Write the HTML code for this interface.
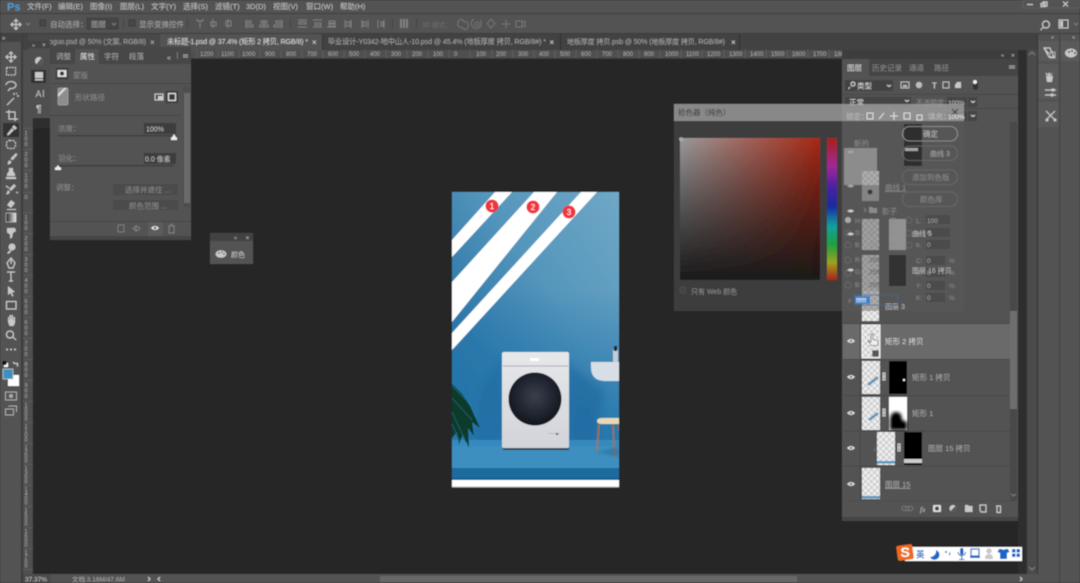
<!DOCTYPE html>
<html lang="zh"><head><meta charset="utf-8"><title>Photoshop</title>
<style>
html,body{margin:0;padding:0;background:#282828;width:1080px;height:583px;overflow:hidden}
svg{display:block;font-family:"Liberation Sans","Noto Sans CJK SC",sans-serif}
text{fill:#c4c4c4;font-size:7.5px}
.d{fill:#8c8c8c}.m{fill:#a8a8a8}.r{font-size:6px;fill:#aaa}
.v{font-size:5.500px;fill:#aaa}
.i{fill:none;stroke:#c8c8c8;stroke-width:1.2}.f{fill:#c8c8c8}
.di{fill:none;stroke:#808080;stroke-width:1}.df{fill:#8a8a8a}
.b{fill:#1769c9}
</style></head><body>
<svg width="1080" height="583" viewBox="0 0 1080 583" xmlns="http://www.w3.org/2000/svg">
<defs>
<pattern id="ck" width="6" height="6" patternUnits="userSpaceOnUse"><rect width="6" height="6" fill="#efefef"/><rect width="3" height="3" fill="#cfcfcf"/><rect x="3" y="3" width="3" height="3" fill="#cfcfcf"/></pattern>
<linearGradient id="wall" x1="1" y1="0" x2="0" y2="1"><stop offset="0" stop-color="#70a8c6"/><stop offset=".4" stop-color="#5596bc"/><stop offset=".72" stop-color="#2f7aab"/><stop offset="1" stop-color="#1f6b9f"/></linearGradient>
<linearGradient id="low" x1="0" y1="0" x2="0" y2="1"><stop offset="0" stop-color="#2677ad" stop-opacity="0"/><stop offset="1" stop-color="#2677ad"/></linearGradient>
<linearGradient id="wash" x1="0" y1="0" x2="0" y2="1"><stop offset="0" stop-color="#e6e7ea"/><stop offset="1" stop-color="#d2d4da"/></linearGradient>
<linearGradient id="sat" x1="0" y1="0" x2="1" y2="0"><stop offset="0" stop-color="#9a9a9a"/><stop offset="1" stop-color="#a82815"/></linearGradient>
<linearGradient id="blk" x1="0" y1="0" x2="0" y2="1"><stop offset="0" stop-color="#000" stop-opacity="0"/><stop offset="1" stop-color="#1a1a1a"/></linearGradient>
<linearGradient id="hue" x1="0" y1="0" x2="0" y2="1"><stop offset="0" stop-color="#a82218"/><stop offset=".2" stop-color="#a0289a"/><stop offset=".35" stop-color="#4a22a0"/><stop offset=".48" stop-color="#1a2aa0"/><stop offset=".62" stop-color="#10a0a0"/><stop offset=".75" stop-color="#20a040"/><stop offset=".88" stop-color="#a0a020"/><stop offset="1" stop-color="#a82218"/></linearGradient>
<radialGradient id="drum" cx=".5" cy=".45" r=".55"><stop offset="0" stop-color="#3a3f4c"/><stop offset=".85" stop-color="#181c26"/><stop offset="1" stop-color="#10131a"/></radialGradient>
<linearGradient id="grad" x1="0" y1="0" x2="1" y2="0"><stop offset="0" stop-color="#222"/><stop offset="1" stop-color="#eee"/></linearGradient>
<filter id="s" x="-5%" y="-5%" width="110%" height="110%"><feGaussianBlur stdDeviation=".5"/></filter>
<filter id="s2"><feGaussianBlur stdDeviation="1.5"/></filter>
<filter id="s3" x="-30%" y="-30%" width="160%" height="160%"><feGaussianBlur stdDeviation="4"/></filter>
<clipPath id="doc"><rect x="452" y="192" width="167" height="295"/></clipPath>
</defs>

<g filter="url(#s)">
<!-- base -->
<rect width="1080" height="583" fill="#282828"/>
<!-- menu bar -->
<rect width="1080" height="14" fill="#535353"/>
<rect y="13" width="1080" height="1" fill="#3c3c3c"/>
<text x="7" y="10.500" style="font-size:11px;font-weight:bold;fill:#4f9bd0">Ps</text>
<text x="27" y="9">文件(F)</text><text x="58" y="9">编辑(E)</text><text x="90" y="9">图像(I)</text><text x="120" y="9">图层(L)</text><text x="151" y="9">文字(Y)</text><text x="183" y="9">选择(S)</text><text x="215" y="9">滤镜(T)</text><text x="246" y="9">3D(D)</text><text x="273" y="9">视图(V)</text><text x="306" y="9">窗口(W)</text><text x="340" y="9">帮助(H)</text>
<rect x="1023" y="0" width="57" height="8" fill="none" stroke="#666" stroke-width=".7"/>
<path class="i" d="M1027 4.500h6M1043 2h4v4h-4zM1041 3.500h4v3h-4zM1063 1.500l5 5M1068 1.500l-5 5"/>

<!-- options bar -->
<rect y="14" width="1080" height="19" fill="#535353"/>
<rect y="33" width="1080" height="1" fill="#3a3a3a"/>
<path class="i" d="M16 19.500v10M11 24.500h10M14 21.500l2-2 2 2M14 27.500l2 2 2-2M13 22.500l-2 2 2 2M19 22.500l2 2-2 2"/>
<path class="di" d="M26 23l2 2 2-2"/>
<rect x="40" y="20" width="5.500" height="6" fill="#4a4a4a" stroke="#333" stroke-width=".7"/>
<text x="50" y="27" class="m">自动选择：</text>
<rect x="87" y="18" width="31" height="11" fill="#444" stroke="#3a3a3a" stroke-width=".6"/>
<text x="91" y="27" class="m">图层</text>
<path class="di" d="M112 23l2 2 2-2"/>
<rect x="129" y="20" width="6" height="6" fill="#4a4a4a" stroke="#333" stroke-width=".7"/>
<text x="139" y="27" class="m">显示变换控件</text>
<rect x="123" y="18" width="1" height="11" fill="#444"/><rect x="187" y="18" width="1" height="11" fill="#444"/><rect x="290" y="18" width="1" height="11" fill="#444"/><rect x="392" y="18" width="1" height="11" fill="#444"/><rect x="416" y="18" width="1" height="11" fill="#444"/>
<path class="di" d="M197 19v2M203 19v2M197 21h6M200 21v7M213 19v9M211 22h5v4h-5zM228 19v9M226 21h5v5h-5zM246 20v8M246 21h5v2h-5zM246 25h7v2h-7zM264 20v8M261 21h6v2h-6zM260 25h8v2h-8zM282 20v8M276 21h6v2h-6zM274 25h8v2h-8zM298 20h9M299 22h7v2h-7zM298 27h9M313 20h9M315 23h6v2h-6zM313 27h9M327 27h9M329 21h6v2h-6zM329 24h6v2h-6zM345 20v8M351 20v8M347 22h3v4h-3zM362 20v8M368 20v8M363 22h3v4h-3zM378 20v8M384 20v8M381 22h2v4h-2z"/>
<rect x="403" y="19" width="2" height="9" fill="#808080"/><rect x="400" y="19" width="2" height="9" fill="#808080"/><rect x="406" y="19" width="2" height="9" fill="#808080"/>
<text x="422" y="27" style="font-size:6.500px;fill:#6e6e6e">3D 模式：</text>
<path d="M458 23a3 3 0 0 1 6-1a3 3 0 0 1 4 4a3 3 0 0 1-6 1a3 3 0 0 1-4-4zM474 19a5 5 0 1 0 6 1M477 22a2 2 0 1 0 .1 0M491 19l4 4.500-4 4.500-4-4.500zM506 19.500v9M501.500 24h9M516 21h6v6h-6zM522 23l3-2v6l-3-2z" fill="none" stroke="#747474" stroke-width="1"/>
<path class="i" d="M1046 21a3.500 3.500 0 1 1-.1 0M1043 27.500l-2.500 2.500"/>
<rect x="1059" y="20" width="9" height="8" fill="none" stroke="#c8c8c8"/><rect x="1060" y="21" width="3" height="6" fill="#c8c8c8"/>
<path class="di" d="M1074 23l2 2 2-2"/>

<!-- tab row -->
<rect y="34" width="1080" height="16" fill="#424242"/>
<rect x="28" y="34" width="132" height="16" fill="#484848"/>
<text x="49" y="44" class="m" textLength="97" style="font-size:7px">oguo.psd @ 50% (文案, RGB/8)</text>
<text x="150" y="45" style="font-size:8px;fill:#bbb">×</text>
<rect x="160" y="34" width="162" height="16" fill="#535353"/>
<text x="167" y="44" textLength="141" style="font-size:7.200px;fill:#dcdcdc">未标题-1.psd @ 37.4% (矩形 2 拷贝, RGB/8) *</text>
<text x="312" y="45" style="font-size:8px;fill:#ddd">×</text>
<rect x="322" y="34" width="1" height="16" fill="#333"/>
<text x="328" y="44" class="m" textLength="218" style="font-size:7.200px">毕业设计-Y0342-地中山人-10.psd @ 45.4% (地板厚度 拷贝, RGB/8#) *</text>
<text x="549.500" y="45" style="font-size:8px;fill:#ddd">×</text>
<rect x="560" y="34" width="1" height="16" fill="#333"/>
<text x="567" y="44" class="m" textLength="158" style="font-size:7px">地板厚度 拷贝.psb @ 50% (地板厚度 拷贝, RGB/8#)</text>
<text x="731" y="45" style="font-size:8px;fill:#ddd">×</text>
<rect x="739" y="34" width="1" height="16" fill="#333"/>

<!-- top ruler -->
<rect x="23" y="50" width="1015" height="9" fill="#505050"/>
<rect x="23" y="58" width="1004" height="1" fill="#3a3a3a"/>
<text class="r" x="200" y="56">1200</text><text class="r" x="221" y="56">1100</text><text class="r" x="242" y="56">1000</text><text class="r" x="265" y="56">900</text><text class="r" x="286" y="56">800</text><text class="r" x="307" y="56">700</text><text class="r" x="328" y="56">600</text><text class="r" x="349" y="56">500</text><text class="r" x="370" y="56">400</text><text class="r" x="391" y="56">300</text><text class="r" x="412" y="56">200</text><text class="r" x="433" y="56">100</text><text class="r" x="454" y="56">0</text><text class="r" x="476" y="56">100</text><text class="r" x="496" y="56">200</text><text class="r" x="518" y="56">300</text><text class="r" x="539" y="56">400</text><text class="r" x="560" y="56">500</text><text class="r" x="581" y="56">600</text><text class="r" x="602" y="56">700</text><text class="r" x="623" y="56">800</text><text class="r" x="644" y="56">900</text><text class="r" x="665" y="56">1000</text><text class="r" x="686" y="56">1100</text><text class="r" x="707" y="56">1200</text><text class="r" x="729" y="56">1300</text><text class="r" x="750" y="56">1400</text><text class="r" x="771" y="56">1500</text><text class="r" x="792" y="56">1600</text><text class="r" x="813" y="56">1700</text><text class="r" x="834" y="56">180</text><text class="r" x="1023" y="56">2</text>
<path d="M197 50v8M218 50v8M239 50v8M260 50v8M281 50v8M302 50v8M323 50v8M344 50v8M365 50v8M386 50v8M407 50v8M428 50v8M449 50v8M470 50v8M492 50v8M513 50v8M534 50v8M555 50v8M576 50v8M597 50v8M618 50v8M639 50v8M660 50v8M681 50v8M702 50v8M724 50v8M745 50v8M766 50v8M787 50v8M808 50v8M829 50v8" stroke="#6a6a6a" stroke-width=".6"/>

<!-- left ruler -->
<rect x="23" y="50" width="10" height="524" fill="#505050"/>
<rect x="32.500" y="58" width=".7" height="516" fill="#3a3a3a"/>
<path d="M23 128.500h10M23 149.500h10M23 170.500h10M23 192.500h10M23 212.500h10M23 233.500h10M23 254.500h10M23 275.500h10M23 296.500h10M23 317.500h10M23 338.500h10M23 359.500h10M23 380.500h10M23 401.500h10M23 422.500h10M23 443.500h10M23 464.500h10M23 485.500h10M23 506.500h10M23 527.500h10M23 548.500h10M23 569.500h10" stroke="#666" stroke-width=".5"/>
<text class="v" x="24.500" y="135"><tspan x="24.500">1</tspan><tspan x="24.500" dy="5.500">0</tspan><tspan x="24.500" dy="5.500">0</tspan></text>
<text class="v" x="24.500" y="156"><tspan x="24.500">2</tspan><tspan x="24.500" dy="5.500">0</tspan><tspan x="24.500" dy="5.500">0</tspan></text>
<text class="v" x="24.500" y="177"><tspan x="24.500">1</tspan><tspan x="24.500" dy="5.500">0</tspan><tspan x="24.500" dy="5.500">0</tspan></text>
<text class="v" x="24.500" y="199">0</text>
<text class="v" x="24.500" y="219"><tspan x="24.500">1</tspan><tspan x="24.500" dy="5.500">0</tspan><tspan x="24.500" dy="5.500">0</tspan></text>
<text class="v" x="24.500" y="240"><tspan x="24.500">2</tspan><tspan x="24.500" dy="5.500">0</tspan><tspan x="24.500" dy="5.500">0</tspan></text>
<text class="v" x="24.500" y="261"><tspan x="24.500">3</tspan><tspan x="24.500" dy="5.500">0</tspan><tspan x="24.500" dy="5.500">0</tspan></text>
<text class="v" x="24.500" y="282"><tspan x="24.500">4</tspan><tspan x="24.500" dy="5.500">0</tspan><tspan x="24.500" dy="5.500">0</tspan></text>
<text class="v" x="24.500" y="303"><tspan x="24.500">5</tspan><tspan x="24.500" dy="5.500">0</tspan><tspan x="24.500" dy="5.500">0</tspan></text>
<text class="v" x="24.500" y="324"><tspan x="24.500">6</tspan><tspan x="24.500" dy="5.500">0</tspan><tspan x="24.500" dy="5.500">0</tspan></text>
<text class="v" x="24.500" y="345"><tspan x="24.500">7</tspan><tspan x="24.500" dy="5.500">0</tspan><tspan x="24.500" dy="5.500">0</tspan></text>
<text class="v" x="24.500" y="366"><tspan x="24.500">8</tspan><tspan x="24.500" dy="5.500">0</tspan><tspan x="24.500" dy="5.500">0</tspan></text>
<text class="v" x="24.500" y="387"><tspan x="24.500">9</tspan><tspan x="24.500" dy="5.500">0</tspan><tspan x="24.500" dy="5.500">0</tspan></text>
<text class="v" x="24.500" y="407"><tspan x="24.500">1</tspan><tspan x="24.500" dy="4.500">0</tspan><tspan x="24.500" dy="4.500">0</tspan><tspan x="24.500" dy="4.500">0</tspan></text>
<text class="v" x="24.500" y="428"><tspan x="24.500">1</tspan><tspan x="24.500" dy="4.500">1</tspan><tspan x="24.500" dy="4.500">0</tspan><tspan x="24.500" dy="4.500">0</tspan></text>
<text class="v" x="24.500" y="449"><tspan x="24.500">1</tspan><tspan x="24.500" dy="4.500">2</tspan><tspan x="24.500" dy="4.500">0</tspan><tspan x="24.500" dy="4.500">0</tspan></text>
<text class="v" x="24.500" y="470"><tspan x="24.500">1</tspan><tspan x="24.500" dy="4.500">3</tspan><tspan x="24.500" dy="4.500">0</tspan><tspan x="24.500" dy="4.500">0</tspan></text>
<text class="v" x="24.500" y="491"><tspan x="24.500">1</tspan><tspan x="24.500" dy="4.500">4</tspan><tspan x="24.500" dy="4.500">0</tspan><tspan x="24.500" dy="4.500">0</tspan></text>
<text class="v" x="24.500" y="512"><tspan x="24.500">1</tspan><tspan x="24.500" dy="4.500">5</tspan><tspan x="24.500" dy="4.500">0</tspan><tspan x="24.500" dy="4.500">0</tspan></text>
<text class="v" x="24.500" y="533"><tspan x="24.500">1</tspan><tspan x="24.500" dy="4.500">6</tspan><tspan x="24.500" dy="4.500">0</tspan><tspan x="24.500" dy="4.500">0</tspan></text>
<text class="v" x="24.500" y="554"><tspan x="24.500">1</tspan><tspan x="24.500" dy="4.500">7</tspan><tspan x="24.500" dy="4.500">0</tspan><tspan x="24.500" dy="4.500">0</tspan></text>

<!-- toolbar -->
<rect y="42" width="22" height="541" fill="#535353"/>
<rect x="21" y="34" width="2" height="549" fill="#3b3b3b"/>
<rect y="34" width="22" height="8" fill="#424242"/>
<text x="2" y="40" style="font-size:6px">»</text>
<path class="i" d="M11 52v10M6 57h10M9 54l2-2 2 2M9 60l2 2 2-2M8 55l-2 2 2 2M14 55l2 2-2 2"/>
<rect x="6.500" y="67.500" width="9" height="7.500" class="i" stroke-dasharray="1.800 1"/>
<path class="i" d="M6 85a5 3.500 0 1 1 4 3.500l-2 2.500"/>
<path class="i" d="M7 105l7-7M14 93v2M17 96h2M16 93l1 1"/>
<path class="i" d="M9 110v9h9M6 112h9v9" stroke-width="1.400"/>
<rect x="3" y="123" width="16" height="14" fill="#333"/>
<path class="f" d="M14 125l3 3-2 2-3-3zM12 128l2 2-5 5-2 .5.500-2z"/>
<rect x="6.500" y="140.500" width="9" height="8" rx="3" class="i" stroke-dasharray="2 1"/>
<path class="f" d="M16 153l1.500 1.500-5 6-2-2zM9.500 160l2 2-1.500 2-2.500.5.500-2.500z"/>
<path class="f" d="M9 168h4v3l2 3v2h-8v-2l2-3zM6 177h10v2h-10z"/>
<path class="f" d="M14 184l2 2-5 5-2-2zM8 190l2 2-1.500 2-2.500.5z"/><path class="i" d="M6 186l3 2M16 192l2 1"/>
<path class="f" d="M11 200l4 3-4 5-4-3zM7 209h9v1h-9z"/>
<rect x="6" y="213" width="10" height="9" fill="url(#grad)" stroke="#ccc" stroke-width=".6"/>
<path class="f" d="M7 228h8l1 3-3 2-1 5-2 .5v-4l-3-2z"/>
<path class="f" d="M10 250l-3 3 1.500 1 3-3z"/><circle class="f" cx="12" cy="247" r="3.500"/>
<path class="i" d="M11 258l4 5-2 5h-4l-2-5zM11 258v6"/>
<path class="i" d="M7 272h8M11 272v9M9 281h4" stroke-width="1.500"/>
<path class="f" d="M8 286l7 6-3 .5 1.500 3.500-1.500.5-1.500-3.500-2.500 2z"/>
<rect x="6.500" y="301.500" width="9.500" height="7.500" class="i"/>
<path class="f" d="M8 322v-5h1v3h.5v-5h1.500v4h.5v-4h1.500v5h.5v-3h1.500v6l-1.500 3h-4z"/>
<path class="i" d="M10 331a3.500 3.500 0 1 1-.1 0M13 337l3 3"/>
<circle class="f" cx="7" cy="349.500" r="1"/><circle class="f" cx="11" cy="349.500" r="1"/><circle class="f" cx="15" cy="349.500" r="1"/>
<rect x="4" y="363" width="4" height="4" fill="#fff"/><rect x="2.500" y="361" width="4" height="4" fill="#111"/>
<path class="i" d="M13 362l1.500 1.500 3 0 0 3" stroke-width=".9"/>
<rect x="8" y="375" width="11" height="11" fill="#fff"/>
<rect x="3" y="369" width="10" height="10" fill="#3c8fbf" stroke="#d0d0d0" stroke-width=".7"/>
<rect x="5.500" y="392" width="11" height="8" fill="none" stroke="#aaa"/><circle cx="11" cy="396" r="2" fill="#aaa"/>
<path d="M8.500 406h8v6M5.500 409h8v6h-8z" fill="none" stroke="#aaa"/>

<!-- document -->
<g clip-path="url(#doc)">
<rect x="452" y="192" width="167" height="253" fill="url(#wall)"/>
<rect x="452" y="290" width="167" height="155" fill="url(#low)"/>
<path d="M566 362l38 28-8 55h-27z" fill="#1c659c" opacity=".55" filter="url(#s3)"/>
<path d="M503 355l-22 35-6 52h28z" fill="#1c659c" opacity=".4" filter="url(#s3)"/>
<rect x="452" y="440" width="167" height="28" fill="#3d8fc0"/>
<rect x="452" y="440" width="167" height="6" fill="#358abd"/>
<rect x="452" y="468" width="167" height="11" fill="#1e6b9e"/>
<rect x="452" y="478" width="167" height="2" fill="#155f90"/>
<rect x="452" y="480" width="167" height="7" fill="#fff"/>
<path d="M495 192h17L452 257v-17zM534 192h23L452 322v-40zM581 192h16L452 350v-17z" fill="#fff"/>
<!-- washer -->
<rect x="502" y="352" width="67" height="96" rx="2" fill="url(#wash)"/>
<rect x="503" y="365.500" width="65" height="1" fill="#a8acb2"/>
<rect x="530" y="358" width="9" height="3" fill="#fff"/>
<rect x="503" y="448" width="66" height="2" fill="#33465a"/>
<circle cx="535" cy="399" r="26.500" fill="url(#drum)"/>
<rect x="548" y="433" width="12" height=".8" fill="#b5b8bc"/><rect x="556" y="433" width="2" height="2" fill="#555"/>
<!-- sink -->
<path d="M591 362h28v19h-14q-14 0-14-14z" fill="#d8dee5"/>
<rect x="613" y="350" width="5" height="12" fill="#c5ccd5"/><rect x="614" y="346" width="3" height="5" fill="#222"/>
<!-- stool -->
<path d="M597 421q0-3 5-3h17v6h-17q-5 0-5-3z" fill="#e7d8b6"/>
<path d="M599 424l-2 27M613 424l1.500 34M619 424v6" stroke="#a56f45" stroke-width="1.600" fill="none"/>
<path d="M596 452l23 5v-10z" fill="#235f8a" opacity=".4" filter="url(#s2)"/>
<!-- plant -->
<path d="M452 384l10 10 8 12 10 22-8-6 2 14-6-8 1 20-6-14-4 10-2-12-5 6z" fill="#0c3a2c"/>
<path d="M452 386l14 14M452 398l20 22M452 412l14 30M452 424l8 18" stroke="#1e5b6a" stroke-width="1" fill="none"/>
</g>
<rect x="452" y="486.500" width="167" height="1" fill="#b5b5b5"/>
<circle cx="492" cy="206" r="6.500" fill="#f0353f"/><text x="492" y="209" text-anchor="middle" style="font-size:8px;fill:#fff">1</text>
<circle cx="533" cy="207" r="6.500" fill="#f0353f"/><text x="533" y="210" text-anchor="middle" style="font-size:8px;fill:#fff">2</text>
<circle cx="569" cy="212" r="6.500" fill="#f0353f"/><text x="569" y="215" text-anchor="middle" style="font-size:8px;fill:#fff">3</text>

<!-- narrow strip panel -->
<rect x="28" y="41" width="22" height="77" fill="#505050"/>
<rect x="28" y="41" width="22" height="7" fill="#424242"/>
<text x="32" y="47" style="font-size:5.500px">»</text><text x="42" y="47" style="font-size:6.500px">×</text>
<circle cx="39" cy="61" r="4" fill="#c8c8c8"/><path d="M39 57a4 4 0 0 1 0 8z" fill="#555" transform="rotate(40 39 61)"/>
<rect x="31" y="70" width="15" height="13" fill="#333"/>
<path class="f" d="M35 72h8v6h-8zM35 79h8v1.500h-8z"/>
<text x="35.500" y="97" style="font-size:9px">A</text><rect x="43" y="90" width=".8" height="7" fill="#c8c8c8"/>
<text x="36" y="112" style="font-size:10px;font-weight:bold">¶</text>
<rect x="33" y="118" width="17" height="10" fill="#2e2e2e"/>

<!-- properties panel -->
<rect x="50" y="47" width="141" height="193" fill="#535353"/>
<rect x="50" y="47" width="141" height="17" fill="#474747"/>
<rect x="75" y="49" width="24" height="15" fill="#535353"/>
<text x="56" y="59" class="m">调整</text><text x="80" y="59" style="fill:#ddd">属性</text><text x="104" y="59" class="m">字符</text><text x="129" y="59" class="m">段落</text>
<text x="167" y="60" style="font-size:7px">«</text><rect x="177" y="52" width=".7" height="7" fill="#888"/><path d="M183 55h5M183 57h5" stroke="#aaa"/>
<rect x="56" y="68" width="12" height="11" fill="#3a3a3a" stroke="#444" stroke-width=".6"/><rect x="57.500" y="70" width="9" height="7" fill="#ddd"/><circle cx="62" cy="73.500" r="2" fill="#333"/>
<text x="73" y="78" class="d">蒙版</text>
<rect x="50" y="83" width="141" height=".8" fill="#444"/>
<rect x="50" y="115" width="132" height=".8" fill="#444"/>
<rect x="58" y="88" width="10" height="17" rx="1" fill="#8d8d8d" stroke="#bbb" stroke-width=".5"/><path d="M58 94l6-6h3l-9 9z" fill="#ddd"/>
<text x="75" y="100" class="d">形状路径</text>
<rect x="155" y="94" width="8" height="6" fill="none" stroke="#ccc"/><rect x="158" y="96" width="5" height="4" fill="#ccc"/>
<rect x="166" y="91" width="12" height="12" fill="#383838"/><rect x="168.500" y="93.500" width="7" height="7" fill="none" stroke="#ddd" stroke-width="1.400"/>
<rect x="183" y="86" width="7" height="121" fill="#4e4e4e"/><rect x="184" y="93" width="6" height="110" fill="#6a6a6a"/>
<text x="58" y="131" class="d">浓度：</text>
<rect x="144" y="123" width="32" height="11" fill="#3d3d3d"/><text x="146" y="131.500" style="font-size:7px">100%</text>
<rect x="58" y="135" width="116" height="1.500" fill="#3f3f3f"/><path d="M174 134l-3 5h6z" fill="#eee"/><rect x="171" y="137.500" width="6" height="2.500" fill="#eee"/>
<text x="58" y="161" class="d">羽化：</text>
<rect x="144" y="153" width="32" height="11" fill="#3d3d3d"/><text x="145" y="161.500" style="font-size:7px">0.0 像素</text>
<rect x="58" y="165" width="116" height="1.500" fill="#3f3f3f"/><path d="M58 165l-3 4h6z" fill="#eee"/><rect x="55" y="167.500" width="6" height="2.500" fill="#eee"/>
<text x="56" y="190" class="d">调整：</text>
<rect x="113" y="184" width="65" height="11" fill="#4c4c4c"/><text x="125" y="192.500" class="d">选择并遮住 ...</text>
<rect x="113" y="200" width="65" height="10" fill="#4c4c4c"/><text x="129" y="208.500" class="d">颜色范围 ...</text>
<rect x="50" y="221" width="141" height=".8" fill="#444"/>
<rect x="148" y="222" width="15" height="15" fill="#5c5c5c"/>
<rect x="118" y="225" width="6" height="7" fill="none" stroke="#999" stroke-dasharray="1 1"/>
<path class="di" d="M133 228.500q4-4 7 0q-3 4-7 0zM136 225v7"/>
<path d="M151 228q4-4 8 0q-4 4-8 0z" fill="#e8e8e8"/><circle cx="155" cy="228" r="1.200" fill="#444"/>
<path class="di" d="M168 226h7M169 226v7h5v-7M170 224.500h3"/>
<rect x="50" y="236" width="141" height="4" fill="#444"/>

<!-- colour mini panel -->
<rect x="210" y="233" width="43" height="31" fill="#535353"/>
<rect x="210" y="233" width="43" height="8" fill="#424242"/>
<text x="234" y="239.500" style="font-size:5.500px">»</text><text x="245.500" y="240" style="font-size:6.500px">×</text>
<ellipse cx="221" cy="254" rx="5.500" ry="3.800" fill="#c8c8c8"/><circle cx="219" cy="253" r=".8" fill="#444"/><circle cx="222" cy="252" r=".8" fill="#444"/><circle cx="224" cy="254" r=".8" fill="#444"/>
<text x="231" y="257" style="font-size:7px">颜色</text>

<!-- layers panel -->
<rect x="842" y="50" width="176" height="471" fill="#535353"/>
<rect x="842" y="50" width="176" height="9" fill="#3e3e3e"/>
<rect x="842" y="59" width="176" height="17" fill="#444"/>
<rect x="842" y="59" width="27" height="17" fill="#535353"/>
<text x="847" y="70.500" style="fill:#ddd">图层</text><text x="872" y="70.500" class="d">历史记录</text><text x="909" y="70.500" class="d">通道</text><text x="934" y="70.500" class="d">路径</text>
<text x="1001" y="57" style="font-size:5.500px">«</text><text x="1011" y="57.500" style="font-size:6.500px">×</text>
<path d="M1009 66h6M1009 68h6" stroke="#aaa"/>
<rect x="845" y="80" width="48" height="11" fill="#424242"/>
<path class="i" d="M851 84a2 2 0 1 1 0 .1M850 87l-1.500 2" stroke-width=".9"/>
<text x="857" y="88.500" style="fill:#ddd">类型</text><path class="i" d="M887 85l2 1.500 2-1.500" stroke-width=".8"/>
<rect x="901" y="82" width="8" height="6" fill="none" stroke="#bbb"/><rect x="903" y="85" width="4" height="2" fill="#bbb"/>
<circle cx="919" cy="85" r="3.200" fill="#bbb"/>
<text x="932" y="88.500" style="font-size:8px;font-weight:bold">T</text>
<rect x="943" y="82" width="6" height="6" fill="none" stroke="#bbb"/>
<path class="f" d="M957 82h4v6h-6v-3z"/>
<rect x="973" y="80" width="5" height="10" rx="2.500" fill="#333"/><circle cx="975" cy="82" r="2" fill="#eee"/>
<rect x="842" y="94" width="176" height=".8" fill="#444"/>
<rect x="845" y="97" width="66" height="10" fill="#444"/><text x="849" y="105" style="fill:#ddd">正常</text><path class="i" d="M905 100l2 1.500 2-1.500" stroke-width=".8"/>
<text x="916" y="105" class="d" style="font-size:7px">不透明度：</text>
<rect x="947" y="97" width="20" height="10" fill="#444"/><text x="948" y="105" style="font-size:6.500px">100%</text>
<rect x="968" y="97" width="9" height="10" fill="#444"/><path class="i" d="M971 101l2 1.500 2-1.500" stroke-width=".8"/>
<rect x="842" y="108" width="176" height=".8" fill="#444"/>
<rect x="947" y="111" width="20" height="10" fill="#444"/><rect x="968" y="111" width="9" height="10" fill="#444"/><path class="i" d="M971 115l2 1.500 2-1.500" stroke-width=".8"/>

<!-- layer rows -->
<rect x="843" y="324" width="167" height="35" fill="#6a6a6a"/>
<path d="M843 359.500h167M843 395.500h167M843 431h167M843 466h167M843 501h167M843 323.500h167M860 324v177" stroke="#454545" stroke-width=".7" fill="none"/>
<!-- selected layer -->
<rect x="862" y="325" width="18" height="33" fill="url(#ck)" stroke="#fff" stroke-width=".8"/>
<path d="M871 334v8h-1l-2-1.500 3 5h7v-5l-5-1v-5.500z" fill="#eee" stroke="#444" stroke-width=".6"/>
<rect x="872" y="350" width="7" height="7" fill="#555" stroke="#ddd" stroke-width=".6"/>
<text x="885" y="344" style="fill:#d5d5d5">矩形 2 拷贝</text>
<!-- rect 1 copy -->
<rect x="862" y="361" width="18" height="33" fill="url(#ck)"/><path d="M868 385l10-8" stroke="#4f8fba" stroke-width="2.200"/>
<path class="i" d="M883 373h2v3h-2zM883 377h2v3h-2z" stroke-width=".6"/>
<rect x="889" y="361" width="18" height="33" fill="#000"/><rect x="903" y="379" width="2" height="2" fill="#eee"/>
<text x="912" y="380" class="m">矩形 1 拷贝</text>
<!-- rect 1 -->
<rect x="862" y="397" width="18" height="33" fill="url(#ck)"/><path d="M869 420l9-7" stroke="#4f8fba" stroke-width="2.200"/>
<path class="i" d="M883 409h2v3h-2zM883 413h2v3h-2z" stroke-width=".6"/>
<rect x="889" y="397" width="18" height="33" fill="#fff"/><path d="M890 430v-11q1-7 6-7q6 0 6 8l5 2v8z" fill="#000" filter="url(#s2)"/>
<text x="912" y="416" class="m">矩形 1</text>
<!-- layer 15 copy -->
<text x="873" y="451" class="m" style="font-size:6px">↓</text>
<rect x="877" y="432" width="18" height="33" fill="url(#ck)"/><rect x="877" y="461" width="18" height="2.500" fill="#5a9ac0"/>
<path class="i" d="M898 444h2v3h-2zM898 448h2v3h-2z" stroke-width=".6"/>
<rect x="904" y="432" width="18" height="33" fill="#000"/><rect x="904" y="459" width="18" height="4" fill="#ccc"/>
<text x="928" y="451" class="m">图层 15 拷贝</text>
<!-- layer 15 -->
<rect x="862" y="468" width="18" height="31" fill="url(#ck)"/><rect x="862" y="496" width="18" height="2.500" fill="#5a9ac0"/>
<text x="885" y="487" class="m" style="text-decoration:underline">图层 15</text>
<!-- eyes -->
<g fill="#ddd"><path d="M847 341q4-4 8 0q-4 4-8 0z"/><path d="M847 377q4-4 8 0q-4 4-8 0z"/><path d="M847 413q4-4 8 0q-4 4-8 0z"/><path d="M847 448q4-4 8 0q-4 4-8 0z"/><path d="M847 484q4-4 8 0q-4 4-8 0z"/></g>
<g fill="#444"><circle cx="851" cy="341" r="1"/><circle cx="851" cy="377" r="1"/><circle cx="851" cy="413" r="1"/><circle cx="851" cy="448" r="1"/><circle cx="851" cy="484" r="1"/></g>
<!-- scrollbar -->
<rect x="1010" y="122" width="7" height="379" fill="#4a4a4a"/>
<rect x="1010" y="311" width="7" height="98" fill="#6e6e6e"/>
<path class="di" d="M1011 494l2.500 2 2.500-2"/>
<!-- footer -->
<rect x="842" y="501" width="176" height="16" fill="#535353"/>
<rect x="842" y="517" width="176" height="4" fill="#444"/>
<path d="M904 506.500h3a2 2 0 0 1 0 4h-3a2 2 0 0 1 0-4zM908 506.500h3a2 2 0 0 1 0 4h-3a2 2 0 0 1 0-4z" fill="none" stroke="#777"/>
<text x="920" y="512" style="font-size:7.500px;font-style:italic;font-family:'Liberation Serif',serif">fx</text>
<rect x="933" y="505" width="8" height="7" rx="1" fill="#ddd"/><circle cx="937" cy="508.500" r="2" fill="#444"/>
<circle cx="953" cy="508.500" r="3.500" fill="#ccc"/><path d="M953 505a3.500 3.500 0 0 1 0 7z" fill="#555" transform="rotate(45 953 508.500)"/>
<path class="f" d="M965 505h3l1 1h3.500v6h-7.500z"/>
<path class="i" d="M980 505h6v7h-5l-1-2z" stroke-width=".9"/>
<path class="i" d="M996 506h5M997 506v6.500h3.500v-6.500" stroke-width=".9"/>

<!-- right region -->
<rect x="1018" y="50" width="9" height="524" fill="#2e2e2e"/>
<rect x="1027" y="50" width="10" height="524" fill="#4c4c4c"/>
<path class="di" d="M1029 55l3-3 3 3M1029 567l3 3 3-3"/>
<rect x="1037" y="34" width="1" height="549" fill="#333"/>
<rect x="1038" y="34" width="22" height="549" fill="#535353"/>
<rect x="1059" y="34" width="1" height="549" fill="#3f3f3f"/>
<rect x="1060" y="34" width="20" height="549" fill="#535353"/>
<text x="1051" y="39" style="font-size:5.500px">«</text><text x="1072" y="39" style="font-size:5.500px">«</text>
<rect x="1038" y="41" width="21" height="20" fill="#5a5a5a"/><rect x="1061" y="41" width="19" height="20" fill="#5a5a5a"/>
<path class="i" d="M1044 48l5 9h5l-4-9zM1044 48l5 6" stroke-width=".9"/><rect x="1050" y="52" width="5" height="6" fill="none" stroke="#ccc" stroke-width=".7"/>
<ellipse cx="1071" cy="53" rx="6" ry="4.500" fill="#c8c8c8"/><circle cx="1069" cy="52" r="1" fill="#444"/><circle cx="1072" cy="51" r="1" fill="#444"/><circle cx="1075" cy="53" r="1" fill="#444"/>
<rect x="1038" y="64" width="21" height="35" fill="#5a5a5a"/><rect x="1038" y="102" width="21" height="25" fill="#5a5a5a"/>
<path class="f" d="M1046 76h7l-1 6h-5zM1046 72l2 3 1-3 2 3 1-3v3l-3 1-3-1z"/>
<path class="i" d="M1045 90h11M1045 95h11" stroke-width=".9"/><circle class="f" cx="1053" cy="90" r="1.600"/><circle class="f" cx="1052" cy="95" r="1.600"/>
<path class="i" d="M1046 111l9 9M1055 111l-9 9" stroke-width="1.400"/><circle class="f" cx="1047" cy="120" r="1.500"/><circle class="f" cx="1055" cy="120" r="1.500"/>

<!-- status bar -->
<rect x="23" y="574" width="1015" height="9" fill="#535353"/>
<rect x="23" y="574" width="28" height="9" fill="#4b4b4b"/>
<text x="25" y="581.500" style="font-size:6.500px">37.37%</text>
<text x="72" y="581.500" class="m" style="font-size:6.500px">文档:3.16M/47.6M</text>
<path class="i" d="M148 577l2 2-2 2M160 577l-2 2 2 2" stroke-width=".7"/>
<rect x="380" y="576" width="417" height="6" fill="#686868"/>
<path class="i" d="M1020 577l2 2-2 2" stroke-width=".7"/>

<!-- colour picker -->
<rect x="844" y="148" width="33" height="37" fill="#b3b3b3"/>
<rect x="862" y="171" width="17" height="14" fill="url(#ck)"/>
<rect x="862" y="185" width="17" height="16" fill="#a5a5a5"/><circle cx="870" cy="192" r="2.500" fill="#222"/>
<path d="M847 152q4-3 7 0q-3 3-7 0zM847 186q4-3 7 0q-3 3-7 0z" fill="#ddd"/>
<rect x="904" y="124" width="18" height="42" fill="#0e0e0e"/><rect x="905" y="148" width="13" height="3" fill="#ddd"/>
<rect x="862" y="219" width="17" height="31" fill="url(#ck)" opacity=".85"/>
<rect x="889" y="219" width="17" height="31" fill="#bdbdbd"/>
<rect x="862" y="255" width="17" height="36" fill="url(#ck)" opacity=".85"/>
<path d="M889 255h17v31h-17z" fill="#111"/>
<rect x="862" y="291" width="17" height="30" fill="url(#ck)"/>
<rect x="674" y="121" width="290" height="190" fill="rgba(90,90,90,.44)"/>
<rect x="674" y="104" width="290" height="17" fill="rgba(160,160,160,.8)"/>
<text x="678" y="115" style="fill:#2e2e2e;font-size:7.500px">拾色器（纯色）</text>
<path d="M952 109l6 6M958 109l-6 6" stroke="#333" stroke-width="1" fill="none"/>
<text x="846" y="119" style="fill:#bcbcbc">锁定：</text>
<path d="M867 113h6v6h-6zM879 119l5-6M890 116h8M894 112v8M904 113h6v6h-6zM917 115h5v5h-5z" stroke="#dcdcdc" fill="none" stroke-width="1.100"/>
<text x="928" y="119" style="fill:#bcbcbc">填充：</text><text x="948" y="119" style="font-size:6.500px;fill:#eee">100%</text>
<rect x="680" y="138" width="140" height="142" fill="url(#sat)"/>
<rect x="680" y="138" width="140" height="142" fill="url(#blk)"/>
<circle cx="681" cy="139" r="1.500" fill="none" stroke="#ccc" stroke-width=".6"/>
<rect x="827" y="138" width="10" height="142" fill="url(#hue)"/>
<rect x="680" y="287" width="6" height="6" fill="#444" stroke="#555" stroke-width=".5"/>
<text x="691" y="294" style="font-size:7px" class="d">只有 Web 颜色</text>
<text x="854" y="146" class="d">新的</text>
<g fill="none" stroke="#6c6c6c" stroke-width=".8">
<rect x="902.500" y="126.500" width="55" height="14.500" rx="7" stroke="#9a9a9a"/>
<rect x="902.500" y="146" width="55" height="14.500" rx="7"/>
<rect x="902.500" y="170" width="55" height="14.500" rx="7"/>
<rect x="902.500" y="192" width="55" height="14.500" rx="7"/>
</g>
<text x="923" y="136.500" style="fill:#bbb">确定</text>
<text x="930" y="156" class="m" style="font-size:7px">曲线 3</text>
<text x="912" y="180" class="d">添加到色板</text>
<text x="920" y="202" class="d">颜色库</text>
<text x="885" y="190" class="d" style="text-decoration:underline">曲线 1</text>
<path d="M847 211q4-3 7 0q-3 3-7 0z" fill="#ccc"/><path class="di" d="M864 208l2 2-2 2"/>
<path class="df" d="M869 207h3l1 1h4v5h-8z"/><text x="882" y="214" class="d">影子</text>
<circle cx="848" cy="220" r="3" fill="#aaa"/>
<g fill="none" stroke="#6e6e6e" stroke-width=".7"><circle cx="848" cy="233" r="3"/><circle cx="848" cy="245" r="3"/><circle cx="848" cy="260" r="3"/><circle cx="848" cy="273" r="3"/><circle cx="848" cy="285" r="3"/><circle cx="909" cy="220" r="3"/><circle cx="909" cy="233" r="3"/><circle cx="909" cy="245" r="3"/></g>
<text x="855" y="223" class="d" style="font-size:6.500px">H:</text><text x="855" y="235" class="d" style="font-size:6.500px">S:</text><text x="855" y="247" class="d" style="font-size:6.500px">B:</text><text x="855" y="262" class="d" style="font-size:6.500px">R:</text><text x="855" y="274" class="d" style="font-size:6.500px">G:</text><text x="855" y="287" class="d" style="font-size:6.500px">B:</text>
<text x="869" y="223" class="d" style="font-size:6.500px">0</text><text x="869" y="235" class="d" style="font-size:6.500px">0</text><text x="869" y="247" class="d" style="font-size:6.500px">100</text><text x="869" y="262" style="font-size:6.500px;fill:#555">255</text><text x="869" y="274" style="font-size:6.500px;fill:#555">255</text><text x="869" y="287" style="font-size:6.500px;fill:#555">255</text>
<text x="890" y="223" class="d" style="font-size:6.500px">度</text><text x="890" y="235" class="d" style="font-size:6.500px">%</text><text x="890" y="247" class="d" style="font-size:6.500px">%</text>
<g fill="#4c4c4c"><rect x="926" y="215" width="24" height="9"/><rect x="926" y="228" width="24" height="9"/><rect x="926" y="240" width="24" height="9"/><rect x="926" y="256" width="19" height="9"/><rect x="926" y="268" width="19" height="9"/><rect x="926" y="281" width="19" height="9"/><rect x="926" y="293" width="19" height="9"/></g>
<text x="916" y="223" class="d" style="font-size:6.500px">L:</text><text x="927" y="223" class="m" style="font-size:6.500px">100</text>
<text x="916" y="235" class="d" style="font-size:6.500px">a:</text><text x="927" y="235" class="m" style="font-size:6.500px">0</text>
<text x="916" y="247" class="d" style="font-size:6.500px">b:</text><text x="927" y="247" class="m" style="font-size:6.500px">0</text>
<text x="916" y="263" class="d" style="font-size:6.500px">C:</text><text x="927" y="263" class="m" style="font-size:6.500px">0</text><text x="949" y="263" class="d" style="font-size:6.500px">%</text>
<text x="915" y="275" class="d" style="font-size:6.500px">M:</text><text x="927" y="275" class="m" style="font-size:6.500px">0</text><text x="949" y="275" class="d" style="font-size:6.500px">%</text>
<text x="916" y="288" class="d" style="font-size:6.500px">Y:</text><text x="927" y="288" class="m" style="font-size:6.500px">0</text><text x="949" y="288" class="d" style="font-size:6.500px">%</text>
<text x="916" y="300" class="d" style="font-size:6.500px">K:</text><text x="927" y="300" class="m" style="font-size:6.500px">0</text><text x="949" y="300" class="d" style="font-size:6.500px">%</text>
<text x="912" y="236" style="font-size:7px;fill:#bbb">曲线 5</text>
<text x="912" y="273" style="font-size:7px;fill:#bbb">图层 16 拷贝</text>
<text x="885" y="309" style="font-size:7px;fill:#bbb">图层 3</text>
<path d="M847 234q4-3 7 0q-3 3-7 0zM847 270q4-3 7 0q-3 3-7 0z" fill="#ccc"/>
<text x="848" y="303" class="d" style="font-size:6.500px">#</text>
<rect x="854" y="295" width="44" height="10" fill="none" stroke="#3c6a94" stroke-width=".7"/>
<rect x="855" y="296" width="15" height="8" fill="#3f82c8"/><text x="856" y="302.500" style="font-size:6.500px;fill:#e8f0ff">ffffff</text>

<!-- sogou IME -->
<rect x="905" y="547" width="117" height="14" fill="#fff"/>
<rect x="897" y="545" width="16" height="15" rx="2" fill="#ee6a1f" transform="rotate(-8 905 552)"/>
<text x="900.500" y="557" style="font-size:14px;font-weight:bold;fill:#fff">S</text>
<text x="916" y="557.500" style="font-size:8.500px;fill:#1769c9;font-weight:bold">英</text>
<path class="b" d="M936 550a5 5 0 1 1-6 7a6 6 0 0 0 6-7z"/>
<circle class="b" cx="946" cy="552" r="1"/><path class="b" d="M949 552l1.500 1.500-1 2.500-.5-2z"/>
<rect class="b" x="960" y="548" width="3.500" height="7" rx="1.700"/><path d="M958 552a3.700 3.700 0 0 0 7.500 0M961.700 556v3M959 559.500h5.500" stroke="#1769c9" fill="none"/>
<rect x="971" y="549" width="8" height="7" fill="none" stroke="#1769c9" stroke-width="1.200"/><rect x="970" y="556" width="10" height="2" fill="#1769c9"/>
<circle cx="989" cy="551" r="2.700" fill="#c8c8c8"/><path d="M985 559q0-5 4-5t4 5z" fill="#c8c8c8"/>
<path class="b" d="M999 549l3 0 1.500 1 1.500-1 3 0 1.500 3-2.500 1v6h-7v-6l-2.500-1z"/>
<rect class="b" x="1012" y="549" width="3.500" height="3.500"/><rect class="b" x="1016.500" y="549" width="3.500" height="3.500"/><rect class="b" x="1012" y="553.500" width="3.500" height="3.500"/><rect class="b" x="1016.500" y="553.500" width="3.500" height="3.500"/>
</g>
</svg>
</body></html>
